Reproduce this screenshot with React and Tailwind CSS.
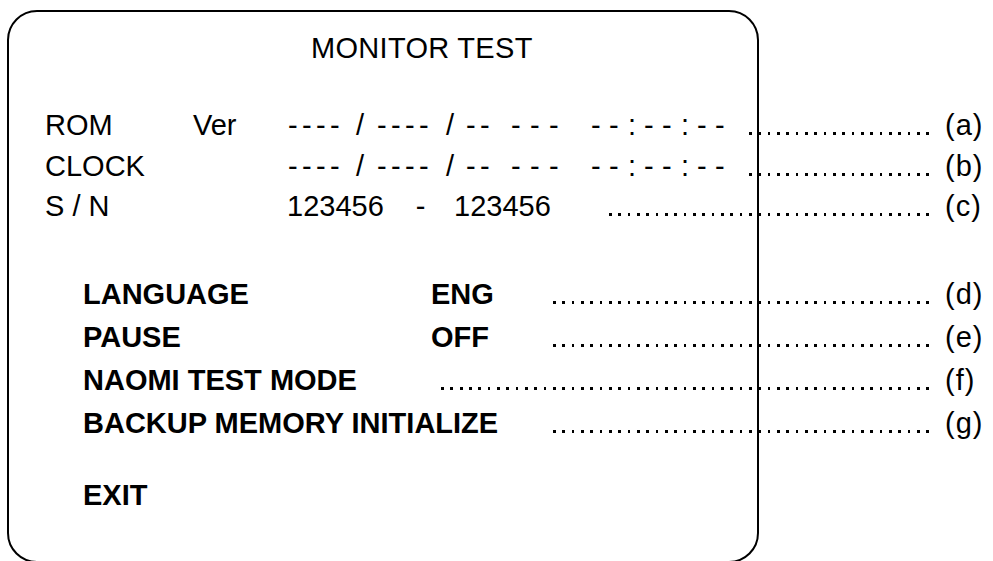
import React from "react";

const DATE = [
  ["-", "w-[14px]"],
  ["-", "w-[14px]"],
  ["-", "w-[14px]"],
  ["-", "w-[26px]"],
  ["/", "w-[21px]"],
  ["-", "w-[14px]"],
  ["-", "w-[14px]"],
  ["-", "w-[14px]"],
  ["-", "w-[27px]"],
  ["/", "w-[20px]"],
  ["-", "w-[14px]"],
  ["-", "w-[31px]"],
  ["-", "w-[19px]"],
  ["-", "w-[19px]"],
  ["-", "w-[42px]"],
  ["-", "w-[18px]"],
  ["-", "w-[19px]"],
  [":", "w-[16px]"],
  ["-", "w-[18px]"],
  ["-", "w-[19px]"],
  [":", "w-[16px]"],
  ["-", "w-[18px]"],
  ["-", "w-[10px]"],
];

function DateStr() {
  return (
    <span className="flex shrink-0 items-baseline">
      {DATE.map(([c, w], i) => (
        <span key={i} className={w}>
          {c}
        </span>
      ))}
    </span>
  );
}

function Leader({ w }) {
  return (
    <div
      className={`ml-auto mr-[16px] h-[3px] shrink-0 ${w} bg-[repeating-linear-gradient(to_left,#000_0_2.7px,transparent_2.7px_9.33px)]`}
    />
  );
}

function Tag({ t }) {
  return <span className="w-[48px] shrink-0 font-normal tracking-[1px]">({t})</span>;
}

export default function App() {
  return (
    <div className="w-[993px] h-[561px] overflow-hidden bg-white pl-[7px] pt-[10px] text-black text-[29px] font-['Liberation_Sans',Arial,sans-serif]">
      <div className="w-[752px] h-[553px] rounded-[30px] border-2 border-black">
        <div className="w-[984px] pt-[15px]">
          <div className="pl-[302px] leading-[42px] tracking-[0.3px]">MONITOR TEST</div>

          <div className="mt-[36px] leading-[40.5px] pl-[36px]">
            <div className="flex items-baseline">
              <span className="w-[148px] shrink-0">ROM</span>
              <span className="w-[95px] shrink-0">Ver</span>
              <DateStr />
              <Leader w="w-[181px]" />
              <Tag t="a" />
            </div>
            <div className="flex items-baseline">
              <span className="w-[243px] shrink-0">CLOCK</span>
              <DateStr />
              <Leader w="w-[181px]" />
              <Tag t="b" />
            </div>
            <div className="flex items-baseline whitespace-pre">
              <span className="w-[242px] shrink-0">S / N</span>
              <span className="shrink-0">123456</span>
              <span className="ml-[32px] shrink-0">-</span>
              <span className="ml-[28.6px] shrink-0">123456</span>
              <Leader w="w-[320.5px]" />
              <Tag t="c" />
            </div>
          </div>

          <div className="mt-[46px] leading-[43.3px] pl-[74px] font-bold">
            <div className="flex items-baseline">
              <span className="w-[348px] shrink-0">LANGUAGE</span>
              <span className="shrink-0">ENG</span>
              <Leader w="w-[376.5px]" />
              <Tag t="d" />
            </div>
            <div className="flex items-baseline">
              <span className="w-[348px] shrink-0">PAUSE</span>
              <span className="shrink-0">OFF</span>
              <Leader w="w-[376.5px]" />
              <Tag t="e" />
            </div>
            <div className="flex items-baseline">
              <span className="shrink-0">NAOMI TEST MODE</span>
              <Leader w="w-[488.5px]" />
              <Tag t="f" />
            </div>
            <div className="flex items-baseline">
              <span className="shrink-0">BACKUP MEMORY INITIALIZE</span>
              <Leader w="w-[376.5px]" />
              <Tag t="g" />
            </div>
          </div>

          <div className="mt-[28px] leading-[43.3px] pl-[74px] font-bold">EXIT</div>
        </div>
      </div>
    </div>
  );
}
